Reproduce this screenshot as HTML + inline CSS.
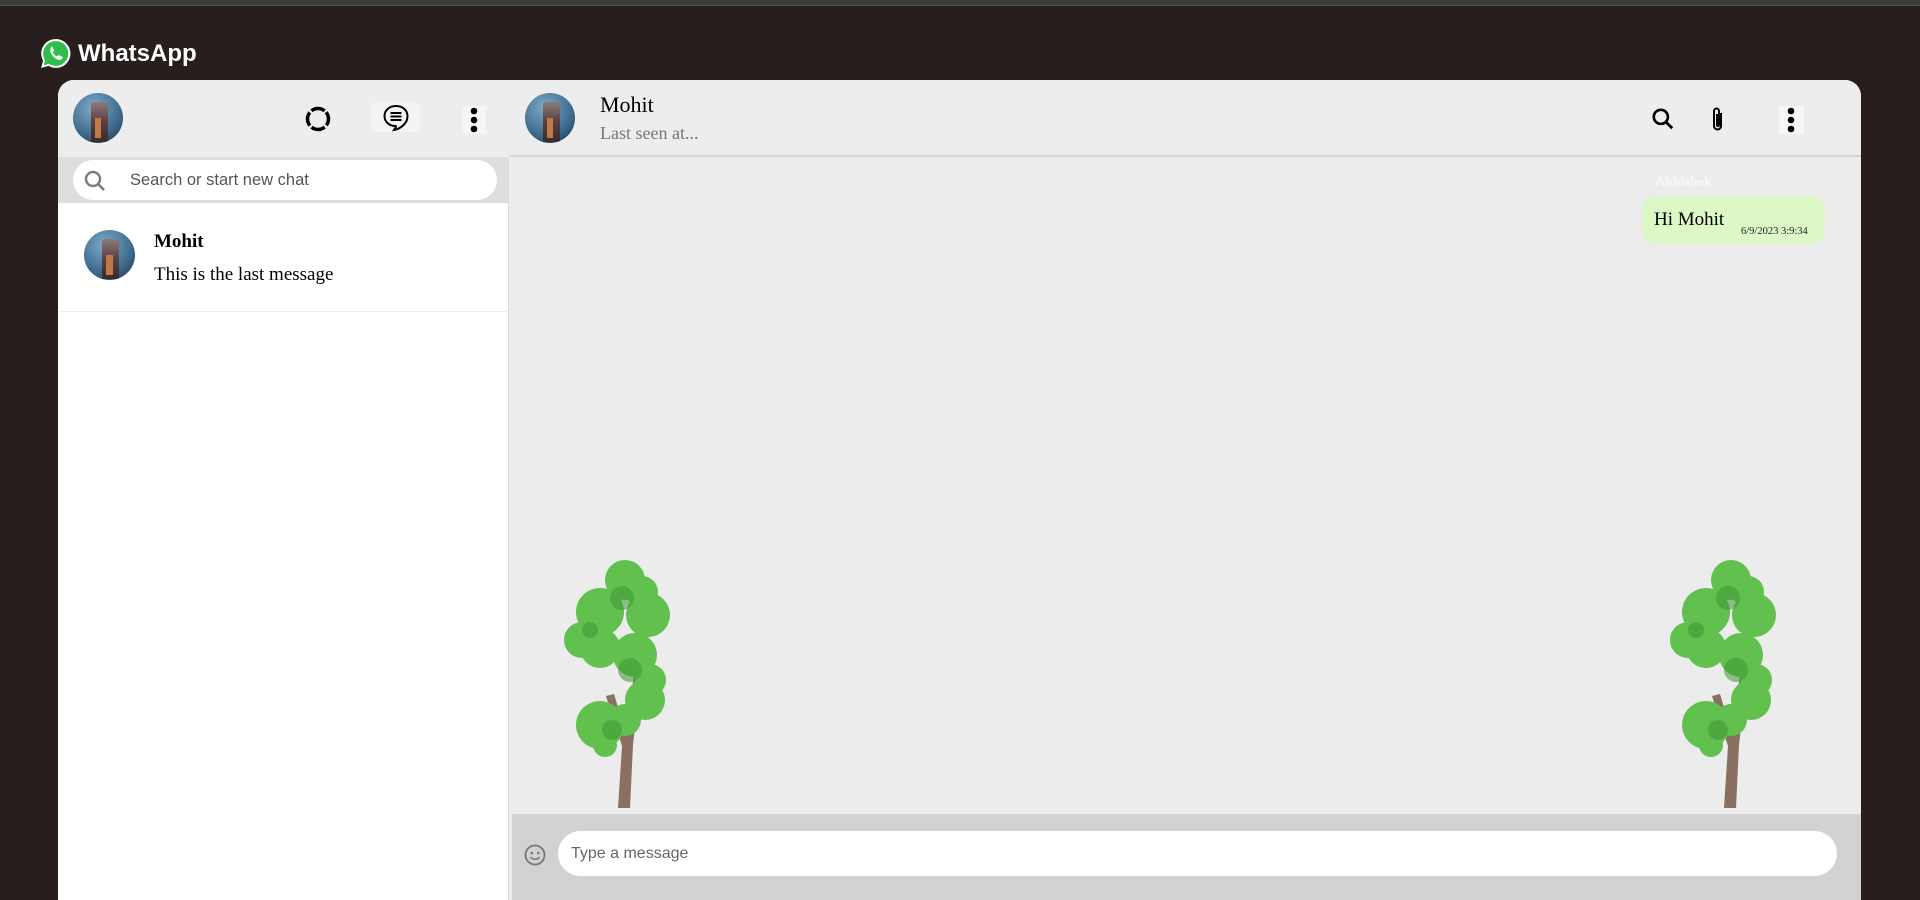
<!DOCTYPE html>
<html><head><meta charset="utf-8"><style>
*{margin:0;padding:0;box-sizing:border-box}
body{width:1920px;height:890px;background:#281e1d;overflow:hidden;position:relative;font-family:"Liberation Serif",serif}
.abs{position:absolute}
.topline{left:0;top:0;width:1920px;height:6px;background:#3b3b3b;border-bottom:1px solid #555}
.logo{left:78px;top:40px;color:#fff;font:bold 24px "Liberation Sans",sans-serif}
.card{left:58px;top:80px;width:1803px;height:820px;background:#ececec;border-radius:16px 16px 0 0;overflow:hidden}
.side{left:0;top:0;width:451px;height:820px;background:#fff;border-right:1px solid #d8d8d8}
.av{border-radius:50%;overflow:hidden;background:radial-gradient(circle at 40% 30%,#7fa9c9,#3d6a8c 60%,#1d2b38)}
.av:after{content:"";position:absolute;left:35%;top:18%;width:34%;height:80%;background:linear-gradient(#8a7a78,#5a4040 50%,#3a2a2a);border-radius:3px 3px 0 0}
.av:before{content:"";position:absolute;left:44%;top:50%;width:12%;height:40%;background:#c07a4a;z-index:2}
</style></head><body>
<div class="abs topline"></div>
<svg class="abs" style="left:39px;top:37px" width="33" height="33" viewBox="0 0 32 32"><path d="M16 2a14 14 0 0 0-12 21L2 30l7.3-2A14 14 0 1 0 16 2z" fill="#fff"/><path d="M16 4a12 12 0 0 0-10.2 18.3L4.6 27.4l5.2-1.4A12 12 0 1 0 16 4z" fill="#2fbe4a"/><path d="M11.5 9.5c.5-.3 1.2-.3 1.5.2l1.5 3c.2.5 0 .9-.4 1.3l-.8.8c.8 1.8 2.3 3.3 4 4.1l.9-.9c.4-.4.9-.5 1.3-.3l3 1.4c.5.3.5 1 .2 1.5-1 1.5-2.7 2-4.4 1.3-3.2-1.3-5.7-3.8-7-7-.7-1.7-.2-3.4.2-4.4z" fill="#fff"/></svg>
<div class="abs logo">WhatsApp</div>
<div class="abs card">
 <div class="abs side">
  <div class="abs" style="left:0;top:0;width:451px;height:77px;background:#ededed"></div>
  <div class="abs av" style="left:15px;top:13px;width:50px;height:50px"></div>
  <svg class="abs" style="left:246px;top:25px" width="28" height="28" viewBox="0 0 28 28"><circle cx="14" cy="14" r="10.5" fill="none" stroke="#000" stroke-width="3.5" stroke-dasharray="14 2.5" transform="rotate(-40 14 14)"/></svg>
  <div class="abs" style="left:313px;top:23px;width:49px;height:29px;background:#f3f3f3"></div>
  <svg class="abs" style="left:323px;top:23px" width="30" height="30" viewBox="0 0 30 30"><path d="M15 3C8.4 3 3.5 7.4 3.5 13s4.6 10 11 10c.5 0 .7.5.4 1L13 27c3.5-.5 7-2.5 9.5-5 2.5-2.3 4-5.4 4-9C26.5 7.4 21.6 3 15 3z" fill="none" stroke="#000" stroke-width="2"/><path d="M9.5 10h11M9.5 13.5h11M9.5 17h11" stroke="#000" stroke-width="2"/></svg>
  <div class="abs" style="left:404px;top:26px;width:24px;height:28px;background:#f6f6f6"></div>
  <svg class="abs" style="left:408px;top:26px" width="16" height="28" viewBox="0 0 16 28"><circle cx="8" cy="5" r="3.3"/><circle cx="8" cy="14" r="3.3"/><circle cx="8" cy="23" r="3.3"/></svg>
  <div class="abs" style="left:0;top:77px;width:451px;height:46px;background:#dedede"></div>
  <div class="abs" style="left:15px;top:80px;width:424px;height:40px;background:#fff;border-radius:20px"></div>
  <svg class="abs" style="left:25px;top:89px" width="24" height="24" viewBox="0 0 24 24"><circle cx="10" cy="10" r="7" fill="none" stroke="#7a7a7a" stroke-width="2.4"/><path d="M15 15l6 6" stroke="#7a7a7a" stroke-width="2.6"/></svg>
  <div class="abs" style="left:72px;top:91px;font:16.5px 'Liberation Sans',sans-serif;color:#555">Search or start new chat</div>
  <div class="abs av" style="left:26px;top:150px;width:51px;height:50px"></div>
  <div class="abs" style="left:96px;top:151px;font:bold 19px 'Liberation Serif',serif;color:#000">Mohit</div>
  <div class="abs" style="left:96px;top:184px;font:19px 'Liberation Serif',serif;color:#000">This is the last message</div>
  <div class="abs" style="left:0;top:231px;width:451px;height:1px;background:#eee"></div>
 </div>
 <div class="abs" style="left:452px;top:0;width:1351px;height:77px;background:#ededed;border-bottom:2px solid #d5d5d5"></div>
 <div class="abs av" style="left:467px;top:13px;width:50px;height:50px"></div>
 <div class="abs" style="left:542px;top:12px;font:22px 'Liberation Serif',serif;color:#000">Mohit</div>
 <div class="abs" style="left:542px;top:43px;font:18px 'Liberation Serif',serif;color:#777">Last seen at...</div>
 <svg class="abs" style="left:1592px;top:26px" width="26" height="26" viewBox="0 0 24 24"><circle cx="10" cy="10" r="6.5" fill="none" stroke="#000" stroke-width="2.4"/><path d="M14.5 14.5l6 6" stroke="#000" stroke-width="2.6"/></svg>
 <svg class="abs" style="left:1650px;top:25px" width="20" height="30" viewBox="0 0 20 30"><path d="M13 8v13a3.5 3.5 0 0 1-7 0V6a2.5 2.5 0 0 1 5 0v14a1 1 0 0 1-2 0V9" fill="none" stroke="#000" stroke-width="2"/></svg>
 <div class="abs" style="left:1721px;top:26px;width:25px;height:28px;background:#f6f6f6"></div>
 <svg class="abs" style="left:1725px;top:26px" width="16" height="28" viewBox="0 0 16 28"><circle cx="8" cy="5" r="3.3"/><circle cx="8" cy="14" r="3.3"/><circle cx="8" cy="23" r="3.3"/></svg>
 <div class="abs" style="left:1597px;top:95px;font:bold 14px 'Liberation Serif',serif;color:#f6f6ff">Abhishek</div>
 <div class="abs" style="left:1584px;top:116px;width:183px;height:48px;background:#dcf8c6;border-radius:14px"></div>
 <div class="abs" style="left:1596px;top:129px;font:19px 'Liberation Serif',serif;color:#000">Hi Mohit</div>
 <div class="abs" style="left:1683px;top:146px;font:10.5px 'Liberation Serif',serif;color:#222">6/9/2023 3:9:34</div>
 <svg class="abs" style="left:502px;top:480px" width="130" height="250" viewBox="0 0 130 250"><path d="M58 248l4-62-16-50 8-2 12 40 8-60 7 1-8 70-3 63z" fill="#8a7060"/><g fill="#62c04e"><circle cx="65" cy="20" r="20"/><circle cx="82" cy="32" r="16"/><circle cx="40" cy="52" r="24"/><circle cx="88" cy="55" r="22"/><circle cx="22" cy="80" r="18"/><circle cx="40" cy="88" r="20"/><circle cx="75" cy="95" r="22"/><circle cx="90" cy="120" r="16"/><circle cx="85" cy="140" r="20"/><circle cx="40" cy="165" r="24"/><circle cx="65" cy="160" r="16"/><circle cx="45" cy="185" r="12"/></g><g fill="#3e9636" opacity=".55"><circle cx="62" cy="38" r="12"/><circle cx="70" cy="110" r="12"/><circle cx="52" cy="170" r="10"/><circle cx="30" cy="70" r="8"/></g></svg>
 <svg class="abs" style="left:1608px;top:480px" width="130" height="250" viewBox="0 0 130 250"><path d="M58 248l4-62-16-50 8-2 12 40 8-60 7 1-8 70-3 63z" fill="#8a7060"/><g fill="#62c04e"><circle cx="65" cy="20" r="20"/><circle cx="82" cy="32" r="16"/><circle cx="40" cy="52" r="24"/><circle cx="88" cy="55" r="22"/><circle cx="22" cy="80" r="18"/><circle cx="40" cy="88" r="20"/><circle cx="75" cy="95" r="22"/><circle cx="90" cy="120" r="16"/><circle cx="85" cy="140" r="20"/><circle cx="40" cy="165" r="24"/><circle cx="65" cy="160" r="16"/><circle cx="45" cy="185" r="12"/></g><g fill="#3e9636" opacity=".55"><circle cx="62" cy="38" r="12"/><circle cx="70" cy="110" r="12"/><circle cx="52" cy="170" r="10"/><circle cx="30" cy="70" r="8"/></g></svg>
 <div class="abs" style="left:454px;top:734px;width:1349px;height:90px;background:#d2d2d2"></div>
 <svg class="abs" style="left:465px;top:763px" width="24" height="24" viewBox="0 0 24 24"><circle cx="12" cy="12" r="9.5" fill="none" stroke="#777" stroke-width="1.8"/><circle cx="8.8" cy="10" r="1.3" fill="#777"/><circle cx="15.2" cy="10" r="1.3" fill="#777"/><path d="M7.5 14c2.3 3 6.7 3 9 0" fill="none" stroke="#777" stroke-width="1.6"/></svg>
 <div class="abs" style="left:500px;top:751px;width:1279px;height:45px;background:#fff;border-radius:23px"></div>
 <div class="abs" style="left:513px;top:765px;font:16px 'Liberation Sans',sans-serif;color:#666">Type a message</div>
</div>
</body></html>
